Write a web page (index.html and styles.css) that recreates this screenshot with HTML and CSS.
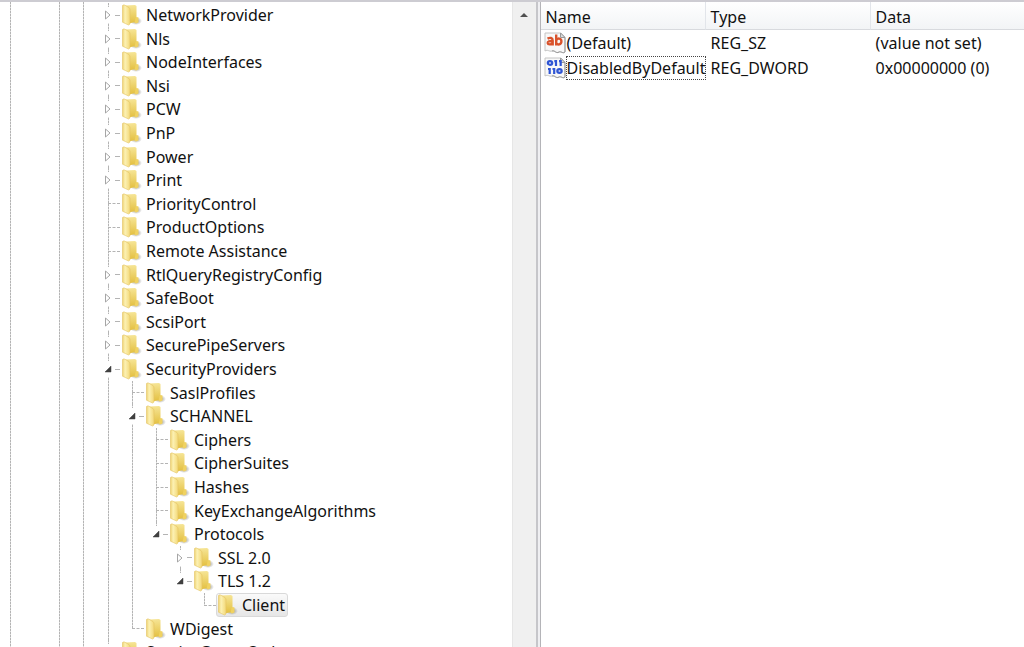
FILE: index.html
```
<!DOCTYPE html>
<html lang="en">
<head>
  <meta charset="UTF-8">
  <meta name="viewport" content="width=device-width, initial-scale=1.0">
  <title>Registry Editor</title>
  <link rel="stylesheet" href="styles.css">
</head>
<body>
  <svg class="defs" aria-hidden="true">
    <defs>
      <linearGradient id="front" x1="0" y1="0" x2="1" y2="0">
        <stop offset="0" stop-color="#eed271"/>
        <stop offset="0.35" stop-color="#fcf1b4"/>
        <stop offset="1" stop-color="#f3d978"/>
      </linearGradient>
      <linearGradient id="back" x1="0" y1="0" x2="0" y2="1">
        <stop offset="0" stop-color="#f6e596"/>
        <stop offset="1" stop-color="#e3bf3f"/>
      </linearGradient>
      <radialGradient id="shade">
        <stop offset="0" stop-color="#8f8f8f"/>
        <stop offset="1" stop-color="#8f8f8f" stop-opacity="0"/>
      </radialGradient>
      <symbol id="folder" viewBox="0 0 20 22">
        <ellipse cx="14" cy="17" rx="6" ry="4" fill="url(#shade)"/>
        <path d="M3 1.5L13 1L14.5 2V18L6 19.5L3 18Z" fill="url(#back)"/>
        <path d="M13.5 14L14.5 13L16.5 13.5V18.5L14 19.5L12.5 19Z" fill="#f0d261"/>
        <path d="M0.5 1.5L2 0.8L7 3.5L8 5V20L6.5 21L0.5 18.2Z" fill="url(#front)" stroke="#e4c567" stroke-width="0.6"/>
      </symbol>
      <symbol id="closed" viewBox="0 0 8 10">
        <path d="M1.5 1L6 5L1.5 9Z" fill="#fff" stroke="#a6a6a6"/>
      </symbol>
      <symbol id="open" viewBox="0 0 8 10">
        <path d="M7 2V8H1Z" fill="#404040" stroke="#404040" stroke-width="0.5"/>
      </symbol>
      <symbol id="page" viewBox="0 0 22 22">
        <path d="M1 1H17L21 5V20C19 22 17 19 15 20C12 22 11 18 8 19C5 20 4 17 1 19Z" fill="#f8f8f8" stroke="#c4c4c4"/>
        <path d="M16.5 1V5.5H21Z" fill="#ddd" stroke="#999"/>
        <path d="M21 6V20C19 22 17 19 15 20C12 22 11 18 8 19" fill="none" stroke="#999"/>
      </symbol>
    </defs>
  </svg>

  <div class="editor">
    <div class="tree-pane">
      <ul class="tree">
        <li><span class="cell line stub"><button class="toggle" aria-label="Expand"><svg><use href="#closed"/></svg></button></span><button class="node"><svg><use href="#folder"/></svg>NetworkProvider</button></li>
        <li><span class="cell line stub"><button class="toggle" aria-label="Expand"><svg><use href="#closed"/></svg></button></span><button class="node"><svg><use href="#folder"/></svg>Nls</button></li>
        <li><span class="cell line stub"><button class="toggle" aria-label="Expand"><svg><use href="#closed"/></svg></button></span><button class="node"><svg><use href="#folder"/></svg>NodeInterfaces</button></li>
        <li><span class="cell line stub"><button class="toggle" aria-label="Expand"><svg><use href="#closed"/></svg></button></span><button class="node"><svg><use href="#folder"/></svg>Nsi</button></li>
        <li><span class="cell line stub"><button class="toggle" aria-label="Expand"><svg><use href="#closed"/></svg></button></span><button class="node"><svg><use href="#folder"/></svg>PCW</button></li>
        <li><span class="cell line stub"><button class="toggle" aria-label="Expand"><svg><use href="#closed"/></svg></button></span><button class="node"><svg><use href="#folder"/></svg>PnP</button></li>
        <li><span class="cell line stub"><button class="toggle" aria-label="Expand"><svg><use href="#closed"/></svg></button></span><button class="node"><svg><use href="#folder"/></svg>Power</button></li>
        <li><span class="cell line stub"><button class="toggle" aria-label="Expand"><svg><use href="#closed"/></svg></button></span><button class="node"><svg><use href="#folder"/></svg>Print</button></li>
        <li><span class="cell line branch"></span><button class="node"><svg><use href="#folder"/></svg>PriorityControl</button></li>
        <li><span class="cell line branch"></span><button class="node"><svg><use href="#folder"/></svg>ProductOptions</button></li>
        <li><span class="cell line branch"></span><button class="node"><svg><use href="#folder"/></svg>Remote Assistance</button></li>
        <li><span class="cell line stub"><button class="toggle" aria-label="Expand"><svg><use href="#closed"/></svg></button></span><button class="node"><svg><use href="#folder"/></svg>RtlQueryRegistryConfig</button></li>
        <li><span class="cell line stub"><button class="toggle" aria-label="Expand"><svg><use href="#closed"/></svg></button></span><button class="node"><svg><use href="#folder"/></svg>SafeBoot</button></li>
        <li><span class="cell line stub"><button class="toggle" aria-label="Expand"><svg><use href="#closed"/></svg></button></span><button class="node"><svg><use href="#folder"/></svg>ScsiPort</button></li>
        <li><span class="cell line stub"><button class="toggle" aria-label="Expand"><svg><use href="#closed"/></svg></button></span><button class="node"><svg><use href="#folder"/></svg>SecurePipeServers</button></li>
        <li><span class="cell line stub"><button class="toggle" aria-label="Collapse"><svg><use href="#open"/></svg></button></span><button class="node"><svg><use href="#folder"/></svg>SecurityProviders</button></li>
        <li><span class="cell line"></span><span class="cell line branch"></span><button class="node"><svg><use href="#folder"/></svg>SaslProfiles</button></li>
        <li><span class="cell line"></span><span class="cell line stub"><button class="toggle" aria-label="Collapse"><svg><use href="#open"/></svg></button></span><button class="node"><svg><use href="#folder"/></svg>SCHANNEL</button></li>
        <li><span class="cell line"></span><span class="cell line"></span><span class="cell line branch"></span><button class="node"><svg><use href="#folder"/></svg>Ciphers</button></li>
        <li><span class="cell line"></span><span class="cell line"></span><span class="cell line branch"></span><button class="node"><svg><use href="#folder"/></svg>CipherSuites</button></li>
        <li><span class="cell line"></span><span class="cell line"></span><span class="cell line branch"></span><button class="node"><svg><use href="#folder"/></svg>Hashes</button></li>
        <li><span class="cell line"></span><span class="cell line"></span><span class="cell line branch"></span><button class="node"><svg><use href="#folder"/></svg>KeyExchangeAlgorithms</button></li>
        <li><span class="cell line"></span><span class="cell line"></span><span class="cell line last stub"><button class="toggle" aria-label="Collapse"><svg><use href="#open"/></svg></button></span><button class="node"><svg><use href="#folder"/></svg>Protocols</button></li>
        <li><span class="cell line"></span><span class="cell line"></span><span class="cell"></span><span class="cell line stub"><button class="toggle" aria-label="Expand"><svg><use href="#closed"/></svg></button></span><button class="node"><svg><use href="#folder"/></svg>SSL 2.0</button></li>
        <li><span class="cell line"></span><span class="cell line"></span><span class="cell"></span><span class="cell line last stub"><button class="toggle" aria-label="Collapse"><svg><use href="#open"/></svg></button></span><button class="node"><svg><use href="#folder"/></svg>TLS 1.2</button></li>
        <li><span class="cell line"></span><span class="cell line"></span><span class="cell"></span><span class="cell"></span><span class="cell line last branch"></span><button class="node selected"><svg><use href="#folder"/></svg>Client</button></li>
        <li><span class="cell line"></span><span class="cell line last branch"></span><button class="node"><svg><use href="#folder"/></svg>WDigest</button></li>
        <li><span class="cell line stub"><button class="toggle" aria-label="Expand"><svg><use href="#closed"/></svg></button></span><button class="node"><svg><use href="#folder"/></svg>ServiceGroupOrder</button></li>
      </ul>
      <div class="scrollbar">
        <button class="scroll-up" aria-label="Scroll up">
          <svg viewBox="0 0 8 4"><path d="M0 4L4 0L8 4Z" fill="#505050"/></svg>
        </button>
      </div>
    </div>

    <div class="values-pane">
      <table class="values">
        <colgroup>
          <col class="col-name">
          <col class="col-type">
          <col>
        </colgroup>
        <thead>
          <tr><th>Name</th><th>Type</th><th>Data</th></tr>
        </thead>
        <tbody>
          <tr>
            <td>
              <div class="value-name">
                <svg viewBox="0 0 22 22">
                  <use href="#page"/>
                  <g fill="none" stroke="#d9532c" stroke-width="2.4">
                    <path d="M3.5 6.6C6 5.4 8.7 5.6 8.7 8.4V13.4M8.7 9C5.5 8.8 3.5 9.4 3.7 11C4 12.9 7.5 12.7 8.7 10.8"/>
                    <path d="M12.2 2.5V13.4M12.2 8.4C13.5 5.7 17.4 6 17.4 9.3C17.4 12.9 13.5 13.2 12.2 11.2"/>
                  </g>
                </svg>
                <span class="name-text">(Default)</span>
              </div>
            </td>
            <td>REG_SZ</td>
            <td>(value not set)</td>
          </tr>
          <tr>
            <td>
              <div class="value-name">
                <svg viewBox="0 0 22 22">
                  <use href="#page"/>
                  <g fill="none" stroke="#2f55d4" stroke-width="2.2">
                    <ellipse cx="6" cy="6" rx="2.2" ry="1.8"/>
                    <path d="M10.3 4.2H12V9M15 4.2H16.7V9"/>
                    <path d="M4 12H5.7V17M8.5 12H10.2V17"/>
                    <ellipse cx="15.5" cy="14" rx="2.2" ry="1.8"/>
                  </g>
                </svg>
                <span class="name-text focused">DisabledByDefault</span>
              </div>
            </td>
            <td>REG_DWORD</td>
            <td>0x00000000 (0)</td>
          </tr>
        </tbody>
      </table>
    </div>
  </div>
</body>
</html>
```
FILE: styles.css
```
* {
  box-sizing: border-box;
}
body, html {
  height: 100%;
  margin: 0;
}
body {
  font-family: "Noto Sans", "Open Sans", sans-serif;
  font-size: 16px;
  color: #111;
  background: #fff;
  overflow: hidden;
}
button {
  font: inherit;
  color: inherit;
  background: none;
  border: none;
  padding: 0;
}
.defs {
  display: block;
  width: 0;
  height: 0;
}
.editor {
  display: flex;
  height: 100%;
  border-top: 2px solid #cdccd2;
}

/* key tree */
.tree-pane {
  display: flex;
  flex: 0 0 52.5%;
  min-width: 0;
  border-right: 2px solid #c6c6ca;
  overflow: hidden;
}
.tree {
  --dots: repeating-linear-gradient(#b4b4b4 0 2px, #dedede 2px 3px);
  flex: 1;
  display: grid;
  align-content: start;
  grid-auto-rows: 24px 23px 24px 23px 24px;
  margin: 0;
  padding: 1px 0 0 96px;
  list-style: none;
  background-image: var(--dots), var(--dots), var(--dots);
  background-size: 1px 100%;
  background-position: 10px 0, 59px 0, 83px 0;
  background-repeat: no-repeat;
}
.tree li {
  display: flex;
  min-height: 0;
}
.cell {
  flex: 0 0 24px;
  display: flex;
  align-items: center;
  background-repeat: no-repeat;
}
.line {
  background-image: var(--dots);
  background-size: 1px 100%;
  background-position: 12px 0;
}
.line.last {
  background-size: 1px 50%;
}
.branch::after {
  content: "";
  width: 12px;
  margin-left: 12px;
  border-top: 1px dashed #b4b4b4;
}
.stub::after {
  content: "";
  width: 5px;
  border-top: 1px dashed #b4b4b4;
}
.toggle {
  display: flex;
  align-items: center;
  height: 16px;
  margin: 0 3px 0 8px;
  background: #fff;
}
.toggle svg {
  width: 8px;
  height: 10px;
}
.node {
  display: flex;
  align-items: center;
  gap: 4px;
  height: 24px;
  padding: 0 2px 0 1px;
  border: 1px solid transparent;
  border-radius: 3px;
  white-space: nowrap;
}
.node svg {
  width: 20px;
  height: 22px;
}
.node.selected {
  border-color: #d9d9d9;
  background: linear-gradient(#fafafa, #e6e6e6);
}
.scrollbar {
  flex: 0 0 24px;
  border-left: 1px solid #e6e6e6;
  background: #f0f0f0;
}
.scroll-up {
  display: flex;
  justify-content: center;
  align-items: center;
  width: 100%;
  height: 26px;
}
.scroll-up svg {
  width: 8px;
  height: 4px;
}

/* value list */
.values-pane {
  flex: 1;
  min-width: 0;
  border-left: 1px solid #b4b4b8;
  margin-left: 2px;
  box-shadow: -2px 0 #efeff2;
}
.values {
  width: 100%;
  table-layout: fixed;
  border-collapse: separate;
  border-spacing: 0;
}
.col-name, .col-type {
  width: 165px;
}
.values th {
  height: 28px;
  padding: 2px 5px 0;
  font-weight: normal;
  text-align: left;
  border-right: 1px solid #e2e5ea;
  border-bottom: 1px solid #d8dade;
  background: linear-gradient(#fff, #f2f4f6);
}
.values th:last-child {
  border-right: none;
}
.values td {
  height: 25px;
  padding: 0 5px;
  white-space: nowrap;
}
.values td:first-child {
  padding: 0 0 0 3px;
}
.value-name {
  display: flex;
  align-items: center;
}
.value-name svg {
  flex: none;
  width: 22px;
  height: 22px;
}
.name-text {
  height: 24px;
  line-height: 22px;
  border: 1px solid transparent;
}
.name-text.focused {
  border: 1px dotted #444;
}
```
